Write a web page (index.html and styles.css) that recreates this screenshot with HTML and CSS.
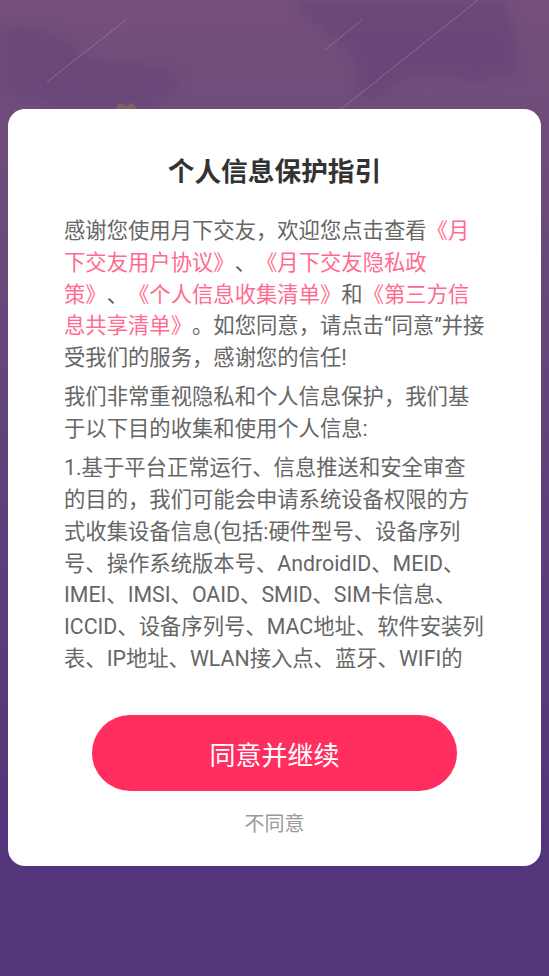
FILE: index.html
```html
<!DOCTYPE html>
<html lang="zh-CN">
<head>
<meta charset="utf-8">
<title>个人信息保护指引</title>
<link rel="stylesheet" href="styles.css">
</head>
<body>
<div class="screen">
  <svg class="deco" width="549" height="976" viewBox="0 0 549 976" aria-hidden="true">
    <defs>
      <filter id="blur" x="-20%" y="-20%" width="140%" height="140%"><feGaussianBlur stdDeviation="6"/></filter>
    </defs>
    <path d="M295 0 L500 0 C515 20 520 50 515 75 C470 85 430 70 400 80 C370 110 350 100 355 60 C340 40 300 20 295 0 Z" fill="#684579" filter="url(#blur)" opacity="0.8"/>
    <path d="M0 30 C40 20 70 40 90 60 C130 65 175 60 180 80 C175 110 120 110 60 105 C30 100 10 95 0 90 Z" fill="#684579" filter="url(#blur)" opacity="0.7"/>
    <path d="M116 109 L119 103 L126 106 L133 103 L137 109 Z" fill="#8a6060" opacity="0.9"/>
    <line x1="47" y1="82" x2="127" y2="19" stroke="#a89aa0" stroke-width="0.8" opacity="0.6"/>
    <line x1="325" y1="50" x2="363" y2="19" stroke="#a89aa0" stroke-width="0.8" opacity="0.6"/>
    <line x1="341" y1="109" x2="478" y2="0" stroke="#a89aa0" stroke-width="0.8" opacity="0.6"/>
  </svg>
  <main class="card">
    <h1 class="title">个人信息保护指引</h1>
    <div class="scroll">
      <p>感谢您使用月下交友，欢迎您点击查看<span class="link">《月下交友用户协议》</span>、<span class="link">《月下交友隐私政<br>策》</span>、<span class="link">《个人信息收集清单》</span>和<span class="link">《第三方信息共享清单》</span>。如您同意，请点击“同意”并接受我们的服务，感谢您的信任!</p>
      <p>我们非常重视隐私和个人信息保护，我们基于以下目的收集和使用个人信息:</p>
      <p>1.基于平台正常运行、信息推送和安全审查的目的，我们可能会申请系统设备权限的方式收集设备信息(包括:硬件型号、设备序列号、操作系统版本号、AndroidID、MEID、IMEI、IMSI、OAID、SMID、SIM卡信息、ICCID、设备序列号、MAC地址、软件安装列表、IP地址、WLAN接入点、蓝牙、WIFI的MAC地址等)，用于保障账号和平台安全。</p>
      <p>2.基于您的授权，我们会收集您的位置信息，用于为您推荐附近的用户。</p>
    </div>
    <button class="agree" type="button">同意并继续</button>
    <button class="refuse" type="button">不同意</button>
  </main>
</div>
</body>
</html>
```
FILE: styles.css
```css
html, body {
  margin: 0;
  padding: 0;
}
body {
  width: 549px;
  height: 976px;
  overflow: hidden;
  font-family: Roboto, "Noto Sans CJK SC", sans-serif;
  text-spacing-trim: space-all;
}
.screen {
  position: relative;
  width: 549px;
  height: 976px;
  background: linear-gradient(180deg, #74507a 0%, #6c4a7b 20%, #5e3f7b 55%, #53357b 85%, #52357b 100%);
  padding-top: 109px;
  box-sizing: border-box;
}
.deco {
  position: absolute;
  left: 0;
  top: 0;
}
.card {
  position: relative;
  margin: 0 8px;
  height: 757px;
  background: #fff;
  border-radius: 17px;
  box-sizing: border-box;
  padding: 0 56px;
  display: flex;
  flex-direction: column;
  align-items: center;
}
.title {
  margin: 45px 0 0;
  font-size: 26.7px;
  line-height: 36px;
  font-weight: 600;
  color: #333;
  letter-spacing: 0;
}
.scroll {
  margin-top: 25px;
  width: 421px;
  height: 461px;
  overflow: hidden;
  color: #666;
  font-size: 21.33px;
  line-height: 31.75px;
  text-spacing-trim: space-all;
}
.scroll p {
  margin: 0 0 7.5px;
}
.link {
  color: #ff6b8f;
}
.agree {
  margin-top: 39px;
  width: 365px;
  height: 76px;
  border: 0;
  border-radius: 38px;
  background: #ff2e5f;
  color: #fff;
  font-family: inherit;
  font-size: 26px;
  padding: 0;
}
.refuse {
  margin-top: 20px;
  border: 0;
  background: none;
  padding: 0;
  font-family: inherit;
  font-size: 20px;
  line-height: 26px;
  color: #999;
}
```
